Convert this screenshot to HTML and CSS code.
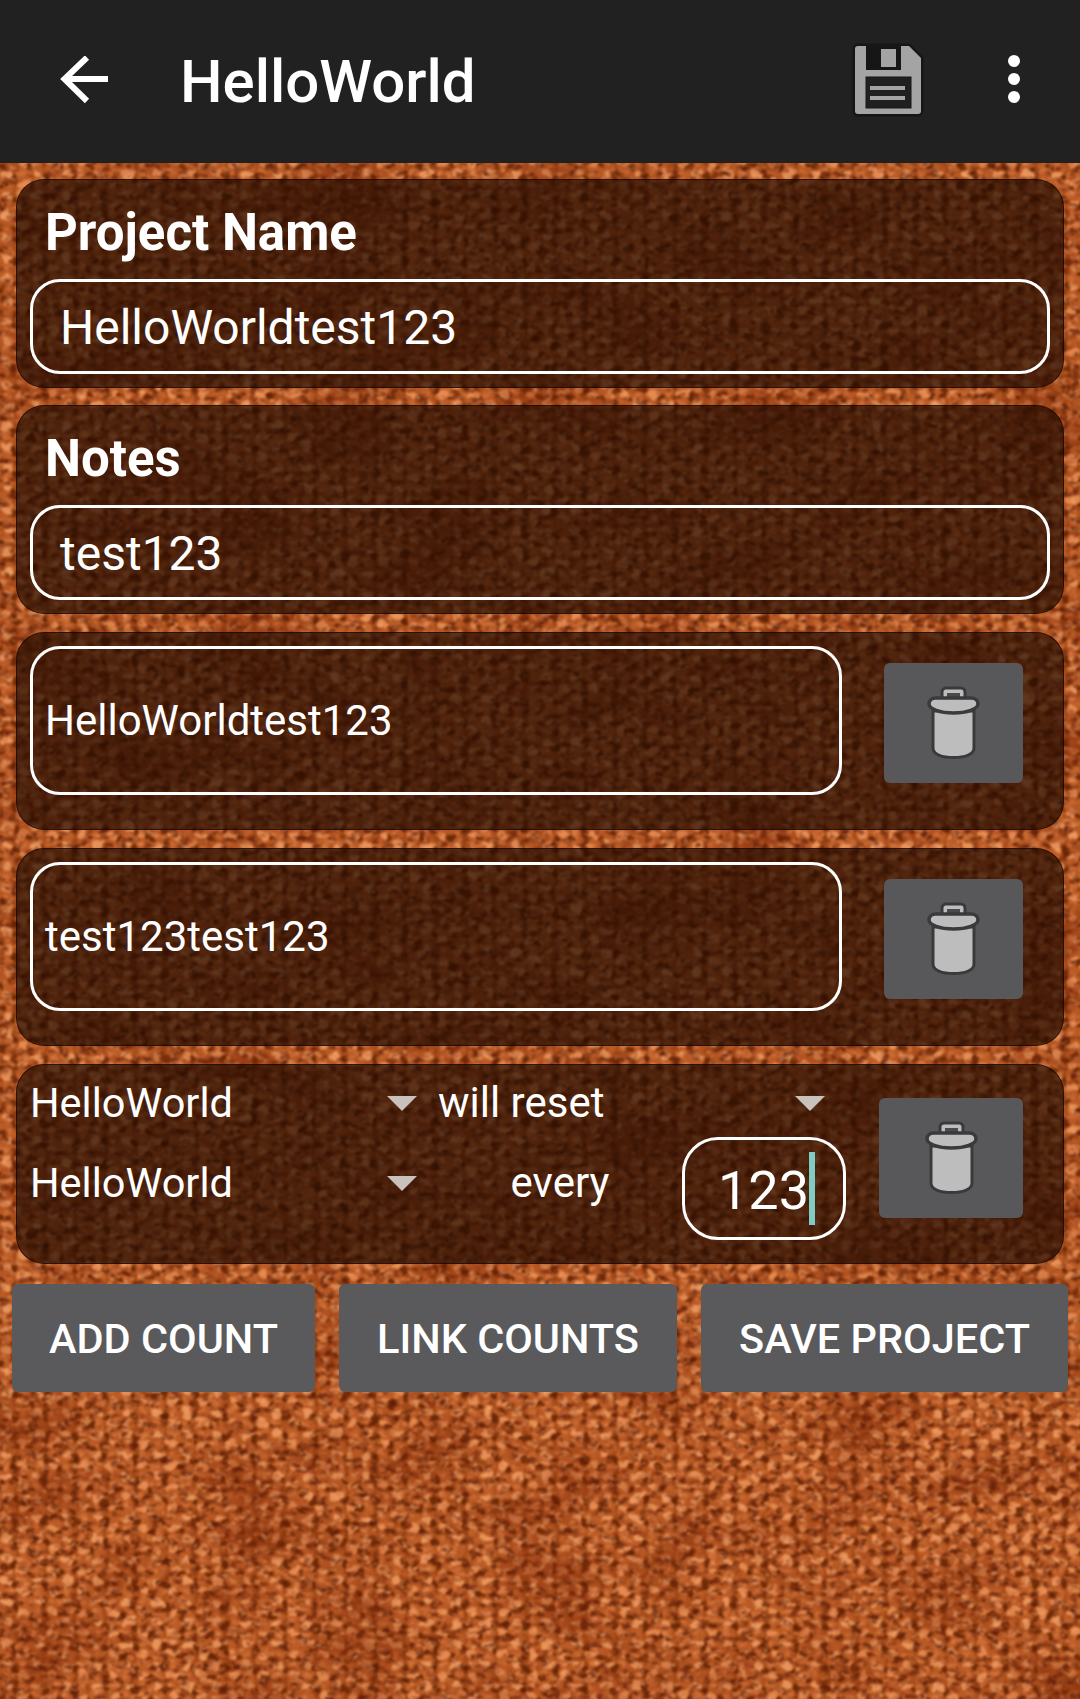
FILE: index.html
```html
<!DOCTYPE html>
<html lang="en">
<head>
    <meta charset="UTF-8">
    <meta name="viewport" content="width=device-width, initial-scale=1.0">
    <title>HelloWorld</title>
    <link rel="stylesheet" href="styles.css">
</head>
<body>
    <!-- knitted wool background -->
    <svg class="knit" width="1080" height="1699" aria-hidden="true">
        <defs>
            <pattern id="stitch" width="30" height="21" patternUnits="userSpaceOnUse">
                <rect width="30" height="21" fill="#bb5b26"/>
                <rect x="14" y="0" width="3" height="21" fill="#a54c1a"/>
                <ellipse cx="7" cy="6" rx="5.500" ry="4" fill="#e8935a"/>
                <ellipse cx="23" cy="16" rx="5.500" ry="4" fill="#e58a50"/>
                <ellipse cx="22" cy="5" rx="3.500" ry="2.500" fill="#cc6c34"/>
                <ellipse cx="7" cy="16" rx="3.500" ry="2.500" fill="#cc6c34"/>
                <circle cx="15" cy="10" r="3.400" fill="#702c08"/>
                <circle cx="0" cy="20" r="3.400" fill="#702c08"/>
                <circle cx="30" cy="20" r="3.400" fill="#702c08"/>
            </pattern>
            <filter id="fray" x="0" y="0" width="100%" height="100%" color-interpolation-filters="sRGB">
                <feTurbulence type="fractalNoise" baseFrequency="0.08" numOctaves="3" seed="4" result="noise"/>
                <feDisplacementMap in="SourceGraphic" in2="noise" scale="12" xChannelSelector="R" yChannelSelector="G"/>
                <feGaussianBlur stdDeviation="1.1"/>
            </filter>
            <filter id="blotch" x="0" y="0" width="100%" height="100%" color-interpolation-filters="sRGB">
                <feTurbulence type="fractalNoise" baseFrequency="0.01 0.018" numOctaves="3" seed="9"/>
                <feColorMatrix values="0 0 0 0 0.5  0 0 0 0 0.16  0 0 0 0 0.03  1.6 0 0 0 -0.72"/>
            </filter>
            <filter id="speck-dark" x="0" y="0" width="100%" height="100%" color-interpolation-filters="sRGB">
                <feTurbulence type="fractalNoise" baseFrequency="0.1 0.14" numOctaves="2" seed="2"/>
                <feColorMatrix values="0 0 0 0 0.38  0 0 0 0 0.12  0 0 0 0 0.02  3 0 0 0 -1.45"/>
                <feGaussianBlur stdDeviation="1"/>
            </filter>
            <filter id="speck-light" x="0" y="0" width="100%" height="100%" color-interpolation-filters="sRGB">
                <feTurbulence type="fractalNoise" baseFrequency="0.13 0.18" numOctaves="2" seed="7"/>
                <feColorMatrix values="0 0 0 0 0.96  0 0 0 0 0.66  0 0 0 0 0.44  2.5 0 0 0 -1.4"/>
                <feGaussianBlur stdDeviation="0.8"/>
            </filter>
        </defs>
        <rect x="-20" y="-20" width="1120" height="1740" fill="url(#stitch)" filter="url(#fray)"/>
        <rect width="1080" height="1699" filter="url(#blotch)"/>
        <rect width="1080" height="1699" filter="url(#speck-dark)"/>
        <rect width="1080" height="1699" filter="url(#speck-light)"/>
    </svg>

    <header class="toolbar">
        <svg class="back-icon" width="48" height="48" viewBox="0 0 48 48">
            <path d="M48 23H5M27 1.500 4.500 23 27 45" fill="none" stroke="#fff" stroke-width="6"/>
        </svg>
        <h1 class="title">HelloWorld</h1>
        <svg class="save-icon" width="68" height="70" viewBox="0 0 68 70">
            <path d="M4 1H55L67 13V66a3 3 0 0 1-3 3H4a3 3 0 0 1-3-3V4a3 3 0 0 1 3-3z" fill="#a4a4a4" stroke="#161616" stroke-width="5" paint-order="stroke"/>
            <rect x="12" y="-1" width="35" height="26" fill="#161616"/>
            <rect x="27" y="4" width="15" height="18" fill="#a4a4a4"/>
            <rect x="12" y="32" width="45" height="31" fill="#202020" stroke="#161616" stroke-width="1"/>
            <rect x="16" y="41" width="35" height="4" fill="#a4a4a4"/>
            <rect x="16" y="51" width="35" height="4" fill="#a4a4a4"/>
        </svg>
        <div class="menu-dots"><span></span><span></span><span></span></div>
    </header>

    <main class="content">
        <section class="panel panel-labelled">
            <div class="panel-label">Project Name</div>
            <div class="field field-wide">HelloWorldtest123</div>
        </section>

        <section class="panel panel-labelled">
            <div class="panel-label">Notes</div>
            <div class="field field-wide">test123</div>
        </section>

        <section class="panel panel-count">
            <div class="field field-count">HelloWorldtest123</div>
            <button class="trash-btn">
                <svg width="53" height="74" viewBox="0 0 53 74"><use href="#trash"/></svg>
            </button>
        </section>

        <section class="panel panel-count">
            <div class="field field-count">test123test123</div>
            <button class="trash-btn">
                <svg width="53" height="74" viewBox="0 0 53 74"><use href="#trash"/></svg>
            </button>
        </section>

        <section class="panel panel-link">
            <div class="link-form">
                <div class="link-row link-row-top">
                    <div class="spinner">HelloWorld</div>
                    <div class="spinner spinner-short">will reset</div>
                </div>
                <div class="link-row link-row-bottom">
                    <div class="spinner">HelloWorld</div>
                    <div class="every">every</div>
                    <div class="field field-number">123<span class="caret"></span></div>
                </div>
            </div>
            <button class="trash-btn trash-btn-link">
                <svg width="53" height="74" viewBox="0 0 53 74"><use href="#trash"/></svg>
            </button>
        </section>

        <div class="actions">
            <button class="action-btn btn-add">Add Count</button>
            <button class="action-btn btn-link">Link Counts</button>
            <button class="action-btn btn-save">Save Project</button>
        </div>
    </main>

    <svg width="0" height="0" class="icon-defs" aria-hidden="true">
        <symbol id="trash" viewBox="0 0 53 74">
            <path d="M15 15V6a4 4 0 0 1 4-4h15a4 4 0 0 1 4 4v9z" fill="#bdbdbd" stroke="#3a3a3c" stroke-width="3"/>
            <rect x="20" y="7" width="13" height="5.500" fill="#4a4a4c"/>
            <path d="M6 25V62c0 7 10 9.500 20.500 9.500S47 69 47 62V25z" fill="#bdbdbd" stroke="#3a3a3c" stroke-width="3"/>
            <path d="M2 18c0-4 3-6 7-6h35c4 0 7 2 7 6 0 5-11 9-24.500 9S2 23 2 18z" fill="#bdbdbd" stroke="#3a3a3c" stroke-width="3.500"/>
        </symbol>
    </svg>
</body>
</html>
```

FILE: styles.css
```css
body {
    position: relative;
    width: 1080px;
    height: 1699px;
    margin: 0;
    overflow: hidden;
    background-color: #bb5b26;
    font-family: Roboto, sans-serif;
    color: #fff;
}
.knit {
    position: absolute;
    left: 0;
    top: 0;
    z-index: -1;
}
.icon-defs {
    display: block;
}

/* top bar */
.toolbar {
    display: flex;
    align-items: center;
    height: 163px;
    background-color: #212121;
}
.back-icon {
    margin-left: 60px;
    margin-top: -4px;
}
.title {
    margin: 0 0 0 72px;
    font-size: 60px;
    font-weight: 500;
    line-height: 70px;
}
.save-icon {
    margin-left: auto;
    margin-top: -3px;
    overflow: visible;
}
.menu-dots {
    display: flex;
    flex-direction: column;
    gap: 6px;
    margin: -5px 60px 0 86px;
}
.menu-dots span {
    width: 12px;
    height: 12px;
    border-radius: 50%;
    background-color: #fff;
}

/* panels */
.content {
    padding: 16px 12px 0;
}
.panel {
    box-sizing: border-box;
    margin: 0 4px 18px;
    padding: 0 13px;
    border: 1px solid rgba(20, 5, 0, 0.6);
    border-radius: 28px;
    background-color: rgba(30, 9, 0, 0.68);
}
.panel-labelled {
    height: 209px;
    padding-top: 25px;
}
.panel-labelled + .panel-labelled {
    margin-top: -1px;
}
.panel-label {
    height: 56px;
    margin: 0 0 18px 15px;
    font-size: 51px;
    font-weight: 700;
    line-height: 56px;
}
.field {
    box-sizing: border-box;
    border: 3px solid #fff;
    border-radius: 30px;
}
.field-wide {
    height: 95px;
    padding-left: 27px;
    font-size: 48px;
    line-height: 92px;
}

.panel-count {
    display: flex;
    align-items: flex-start;
    height: 198px;
    padding-top: 13px;
}
.field-count {
    width: 812px;
    height: 149px;
    padding-left: 12px;
    font-size: 42px;
    line-height: 143px;
}
.trash-btn {
    display: flex;
    align-items: center;
    justify-content: center;
    width: 139px;
    height: 120px;
    margin: 17px 0 0 42px;
    padding: 0;
    border: none;
    border-radius: 6px;
    background-color: #58585a;
}

.panel-link {
    display: flex;
    align-items: flex-start;
    height: 200px;
    padding: 13px 14px 0 13px;
}
.link-form {
    width: 816px;
}
.link-row {
    display: flex;
    align-items: flex-start;
}
.link-row-top {
    gap: 14px;
    height: 59px;
}
.link-row-bottom .spinner,
.link-row-bottom .every {
    margin-top: 21px;
}
.spinner {
    position: relative;
    box-sizing: border-box;
    width: 395px;
    font-size: 41.500px;
    line-height: 50px;
}
.spinner-short {
    margin-left: -1px;
    width: 394px;
    font-size: 42px;
}
/* dropdown arrow */
.spinner::after {
    content: "";
    position: absolute;
    right: 8px;
    top: 18px;
    border-left: 15px solid transparent;
    border-right: 15px solid transparent;
    border-top: 15px solid #c9c1bc;
}
.spinner-short::after {
    right: 7px;
}
.every {
    flex: 1;
    padding-left: 13px;
    font-size: 42px;
    line-height: 50px;
    text-align: center;
}
.field-number {
    display: flex;
    justify-content: flex-end;
    width: 164px;
    height: 103px;
    padding-right: 29px;
    border-radius: 36px;
    font-size: 54px;
    line-height: 102px;
}
.caret {
    align-self: center;
    width: 6px;
    height: 73px;
    margin-right: -1px;
    background-color: #7fccc4;
}
.trash-btn-link {
    width: 144px;
    margin: 20px 0 0 33px;
}

/* bottom buttons */
.action-btn {
    height: 108px;
    padding: 0;
    border: none;
    border-radius: 6px;
    background-color: #5a5a5c;
    color: #fff;
    font-family: Roboto, sans-serif;
    font-size: 41.500px;
    font-weight: 500;
    text-transform: uppercase;
}
.actions {
    display: flex;
    gap: 24px;
    margin-top: 20px;
}
.btn-add {
    width: 303px;
}
.btn-link {
    width: 338px;
}
.btn-save {
    width: 367px;
}
```
